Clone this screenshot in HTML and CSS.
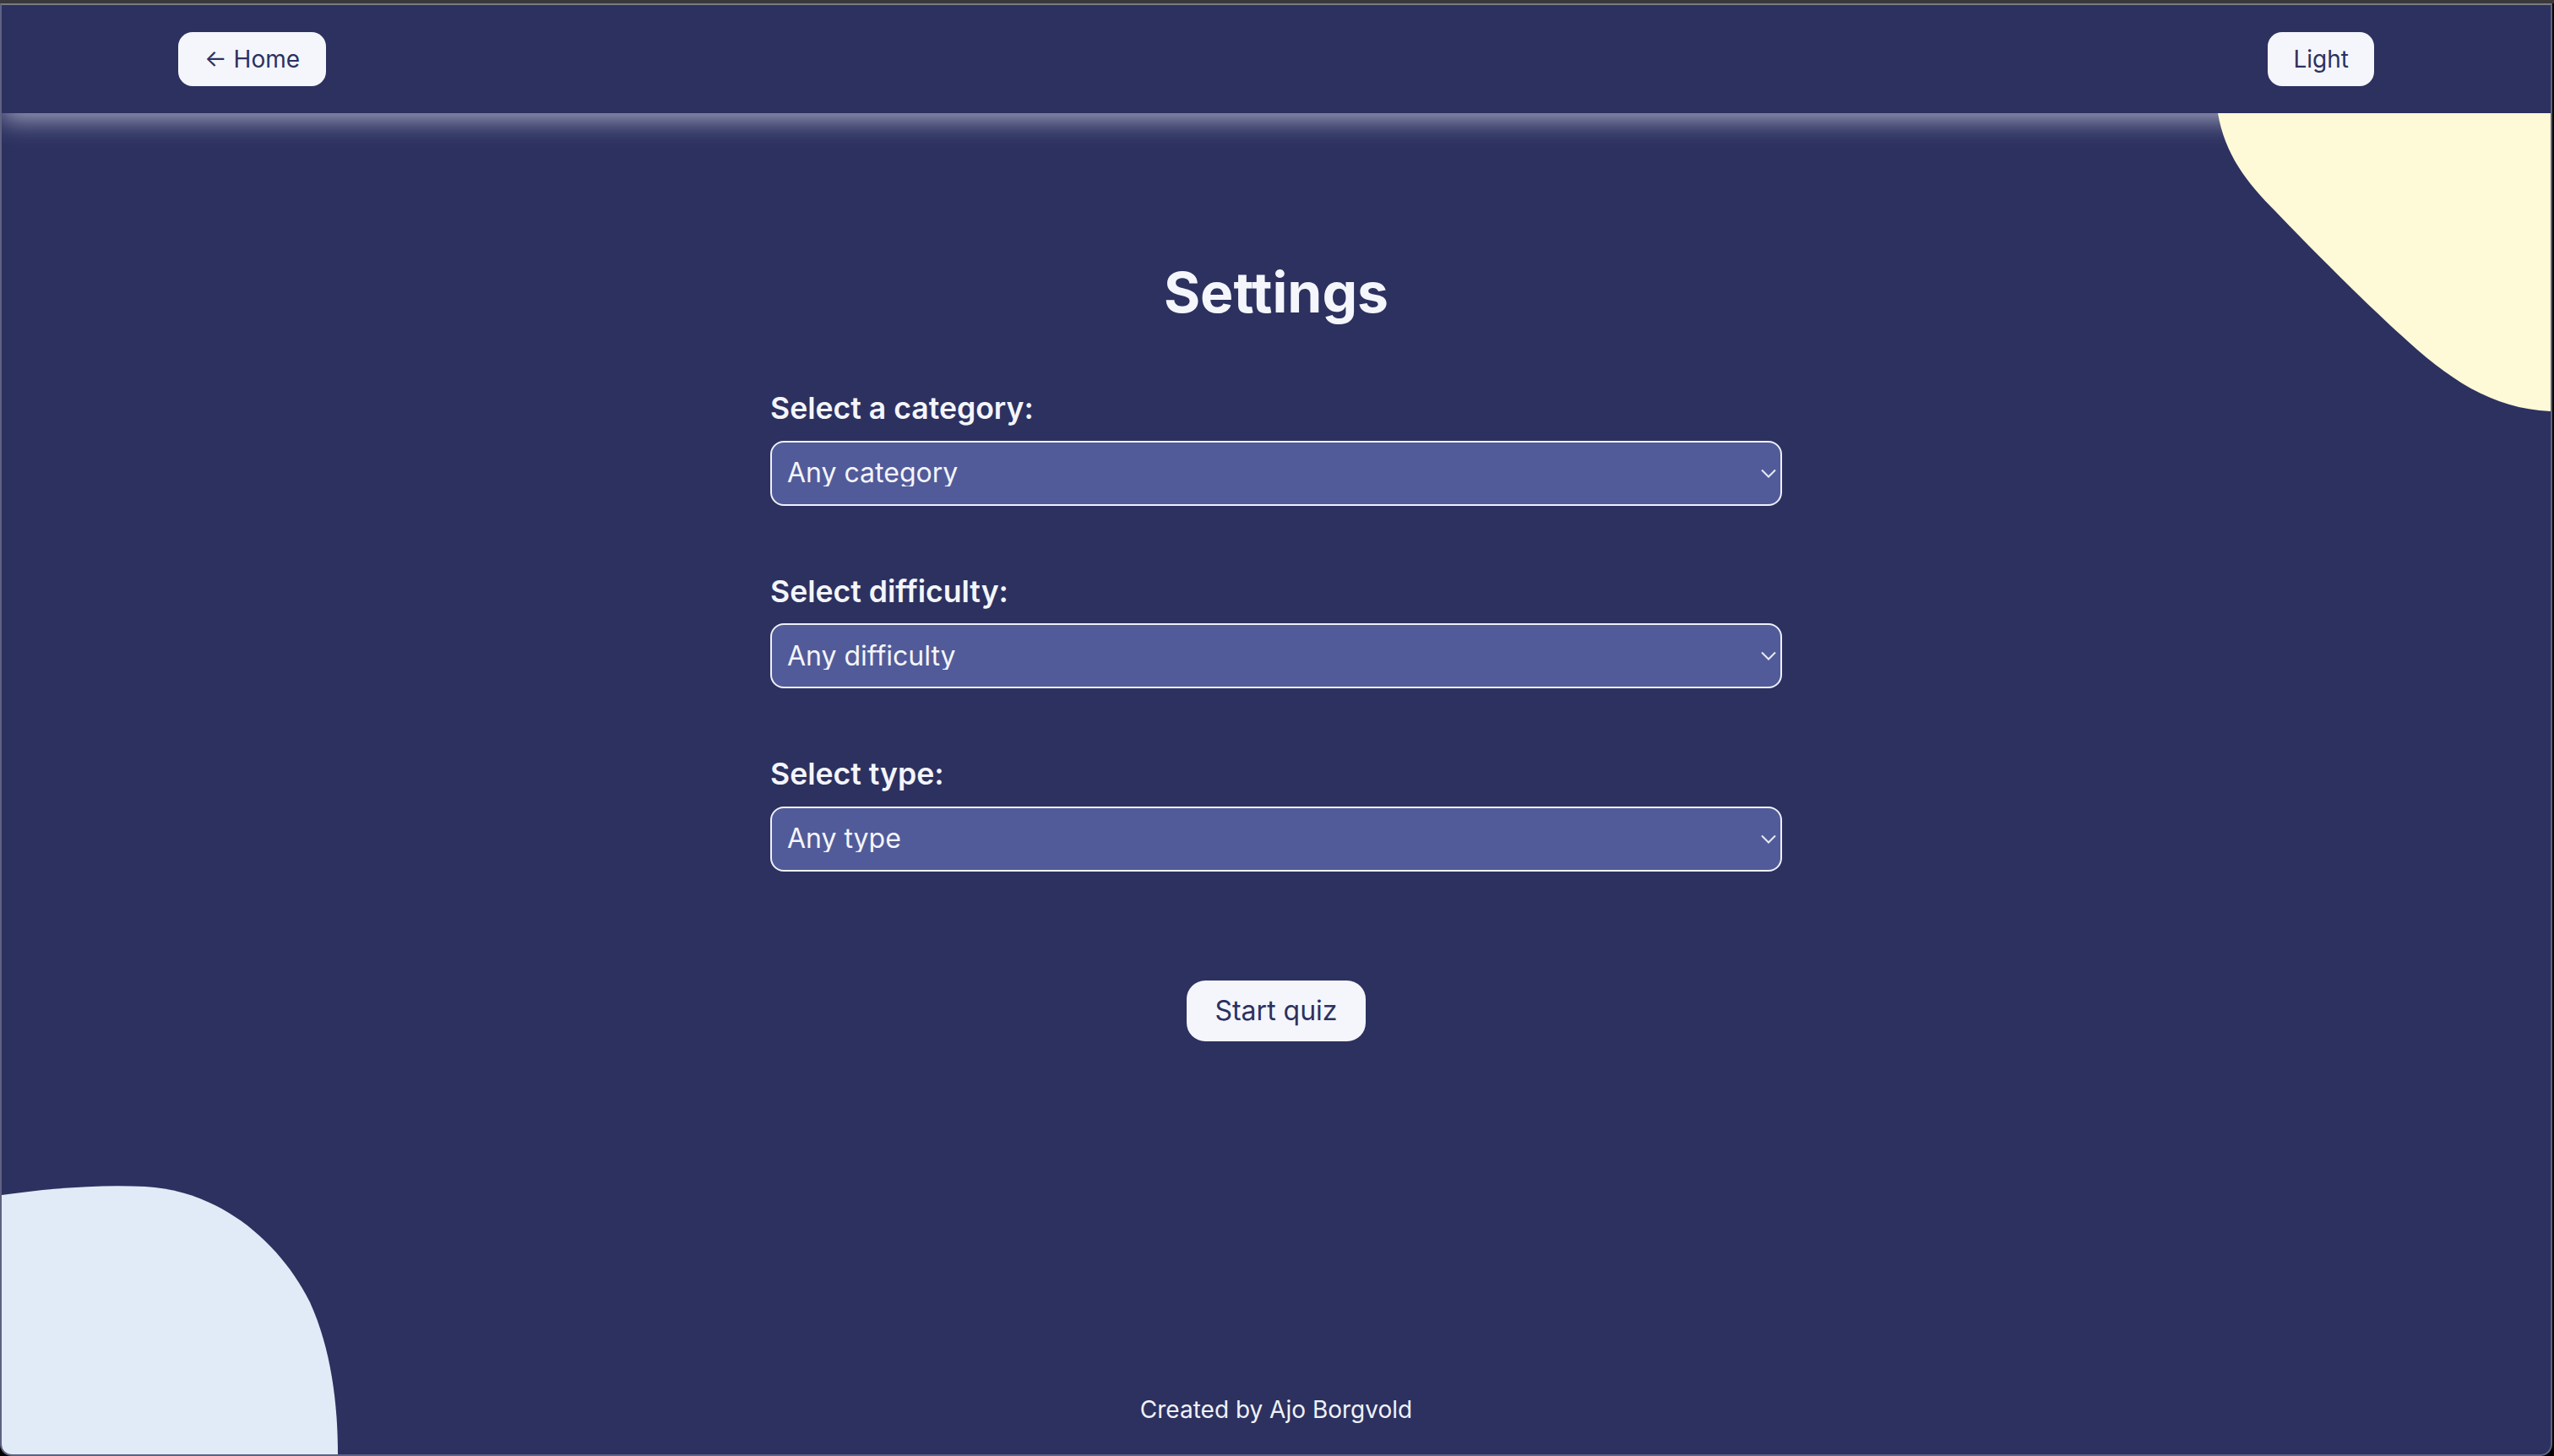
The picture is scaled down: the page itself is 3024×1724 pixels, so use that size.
FILE: index.html
```html
<!DOCTYPE html>
<html lang="en">
<head>
<meta charset="utf-8">
<title>Settings</title>
<link rel="stylesheet" href="styles.css">
</head>
<body>
<div class="window">
  <div class="chrome"></div>
  <div class="app">
    <svg class="blob blob-top" width="422" height="360" viewBox="0 0 422 360" aria-hidden="true">
      <path d="M28 0 C 36 48, 62 82, 96 116 C 140 162, 200 222, 244 262 C 300 314, 352 350, 422 353 L 422 0 Z" fill="#fef9d6"/>
    </svg>
    <svg class="blob blob-bottom" width="400" height="320" viewBox="0 0 400 320" aria-hidden="true">
      <path d="M0 13 C 50 6, 110 0, 170 3 C 260 8, 330 70, 365 140 C 390 195, 398 260, 398 320 L 0 320 Z" fill="#e0ebf7"/>
    </svg>
    <header class="header">
      <button class="pill">← Home</button>
      <button class="pill">Light</button>
    </header>
    <main class="main">
      <h1 class="title">Settings</h1>
      <form class="form">
        <div class="field">
          <label class="label" for="cat">Select a category:</label>
          <div class="select-wrap">
            <select id="cat" class="select"><option>Any category</option></select>
            <svg class="chevron" width="18" height="11" viewBox="0 0 18 11" aria-hidden="true"><polyline points="1,1.5 9,9.5 17,1.5" fill="none" stroke="#e8eaf4" stroke-width="2"/></svg>
          </div>
        </div>
        <div class="field">
          <label class="label" for="diff">Select difficulty:</label>
          <div class="select-wrap">
            <select id="diff" class="select"><option>Any difficulty</option></select>
            <svg class="chevron" width="18" height="11" viewBox="0 0 18 11" aria-hidden="true"><polyline points="1,1.5 9,9.5 17,1.5" fill="none" stroke="#e8eaf4" stroke-width="2"/></svg>
          </div>
        </div>
        <div class="field">
          <label class="label" for="type">Select type:</label>
          <div class="select-wrap">
            <select id="type" class="select"><option>Any type</option></select>
            <svg class="chevron" width="18" height="11" viewBox="0 0 18 11" aria-hidden="true"><polyline points="1,1.5 9,9.5 17,1.5" fill="none" stroke="#e8eaf4" stroke-width="2"/></svg>
          </div>
        </div>
        <button type="button" class="start">Start quiz</button>
      </form>
    </main>
    <footer class="footer">Created by Ajo Borgvold</footer>
  </div>
</div>
</body>
</html>
```

FILE: styles.css
```css
* { box-sizing: border-box; }
html, body { margin: 0; padding: 0; }
body {
  background: #000;
  font-family: Inter, "Noto Sans", "Liberation Sans", sans-serif;
  color: #f4f5fa;
}
.window {
  width: 3024px;
  height: 1724px;
  display: flex;
  flex-direction: column;
  background: #000;
}
.chrome {
  height: 4px;
  background: #39393b;
  flex: none;
}
.app {
  position: relative;
  flex: 1;
  width: 3022px;
  display: flex;
  flex-direction: column;
  background: #2c3160;
  border-top: 2px solid #7a7b80;
  border-left: 2px solid #5f6282;
  border-right: 2px solid #5f6282;
  border-bottom: 2px solid #5f6282;
  border-bottom-left-radius: 14px;
  border-bottom-right-radius: 14px;
  overflow: hidden;
}
.blob { position: absolute; z-index: 2; display: block; }
.blob-top { top: 128px; right: 0; }
.blob-bottom { bottom: 0; left: 0; }
.header {
  position: relative;
  z-index: 1;
  height: 128px;
  flex: none;
  display: flex;
  align-items: center;
  justify-content: space-between;
  padding: 0 209px;
  background: #2c3160;
  box-shadow: 0 8px 28px rgba(230, 232, 245, 0.62);
}
.pill {
  height: 64px;
  padding: 0 31px;
  border: none;
  border-radius: 17px;
  background: #f4f6fb;
  color: #2c3160;
  font-family: inherit;
  font-size: 28px;
  font-weight: 400;
  line-height: 1;
}
.pill + .pill { padding: 0 30px; }
.main {
  flex: 1;
  display: flex;
  flex-direction: column;
  align-items: center;
  padding-top: 179px;
}
.title {
  margin: 0 0 87px;
  font-size: 66px;
  font-weight: 700;
  line-height: 1;
  color: #f4f6fb;
}
.form {
  width: 1198px;
  display: flex;
  flex-direction: column;
  align-items: center;
}
.field {
  width: 100%;
  display: flex;
  flex-direction: column;
  margin-bottom: 84px;
}
.field:last-of-type { margin-bottom: 0; }
.label {
  font-size: 35.6px;
  font-weight: 600;
  line-height: 1;
  margin-bottom: 20px;
  color: #f4f5fa;
}
.select-wrap { position: relative; }
.select {
  -webkit-appearance: none;
  appearance: none;
  display: block;
  width: 100%;
  height: 77px;
  padding: 0 18px;
  border: 2px solid #eef0f8;
  border-radius: 16px;
  background: #515b99;
  color: #f4f5fa;
  font-family: inherit;
  font-size: 32px;
  line-height: 1;
  outline: none;
}
.chevron {
  position: absolute;
  right: 7px;
  top: 33px;
  pointer-events: none;
}
.start {
  margin-top: 129px;
  height: 72px;
  padding: 0 33px;
  border: none;
  border-radius: 22px;
  background: #f4f6fb;
  color: #2c3160;
  font-family: inherit;
  font-size: 32px;
  line-height: 1;
}
.footer {
  flex: none;
  text-align: center;
  font-size: 28px;
  line-height: 1;
  padding-bottom: 39px;
  color: #f0f1f8;
}
```
